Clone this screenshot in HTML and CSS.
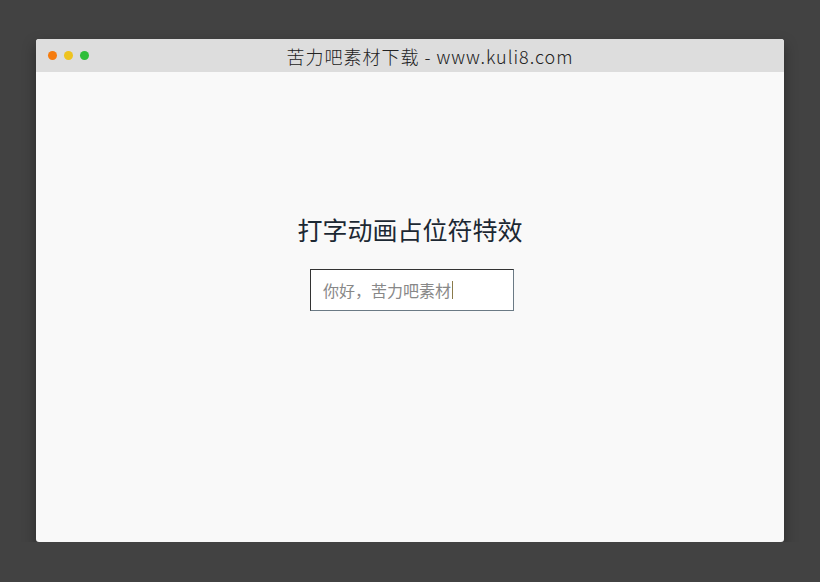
FILE: index.html
```html
<!DOCTYPE html>
<html lang="zh">

<head>
    <meta charset="UTF-8">
    <meta name="viewport" content="width=device-width, initial-scale=1.0">
    <title>打字动画占位符特效</title>
    <link rel="stylesheet" href="styles.css">
</head>

<body>
    <div class="window">
        <div class="title-bar">
            <div class="dots">
                <span class="dot dot-red"></span>
                <span class="dot dot-yellow"></span>
                <span class="dot dot-green"></span>
            </div>
            <div class="title">苦力吧素材下载 - www.kuli8.com</div>
        </div>
        <div class="content">
            <h1>打字动画占位符特效</h1>
            <div class="field">
                <span class="placeholder">你好，苦力吧素材</span><span class="caret"></span>
            </div>
        </div>
    </div>
</body>

</html>
```

FILE: styles.css
```css
html, body {
    margin: 0;
    padding: 0;
    background: #424242;
    font-family: "Noto Sans CJK SC", "DejaVu Sans", sans-serif;
}

body {
    padding: 39px 36px 0;
}

.window {
    width: 748px;
    height: 503px;
    background: #f9f9f9;
    border-radius: 3px;
    overflow: hidden;
    box-shadow: 0 6px 14px rgba(0, 0, 0, 0.35);
    display: flex;
    flex-direction: column;
}

.title-bar {
    height: 33px;
    background: #dddddd;
    position: relative;
    display: flex;
    align-items: center;
    justify-content: center;
}

.dots {
    position: absolute;
    left: 12px;
    top: 12px;
    display: flex;
    gap: 7px;
}

.dot {
    width: 9px;
    height: 9px;
    border-radius: 50%;
}

.dot-red { background: #f57c0f; }
.dot-yellow { background: #eec31f; }
.dot-green { background: #2fbe3a; }

.title {
    font-weight: 300;
    font-size: 18px;
    color: #222;
    letter-spacing: 1px;
    margin-left: 40px;
}

.content {
    flex: 1;
    display: flex;
    flex-direction: column;
    align-items: center;
    padding-top: 137px;
}

h1 {
    margin: 0;
    font-size: 25px;
    font-weight: normal;
    color: #1c2833;
    line-height: 40px;
}

.field {
    margin-top: 20px;
    margin-left: 4px;
    width: 190px;
    height: 40px;
    border: 1px solid #333;
    border-right-color: #6b7a85;
    border-bottom-color: #6b7a85;
    background: #fff;
    display: flex;
    align-items: center;
    padding-left: 12px;
}

.placeholder {
    font-size: 16px;
    color: #888;
}

.caret {
    width: 1px;
    height: 18px;
    background: #8a7a4a;
    margin-left: 1px;
}
```
